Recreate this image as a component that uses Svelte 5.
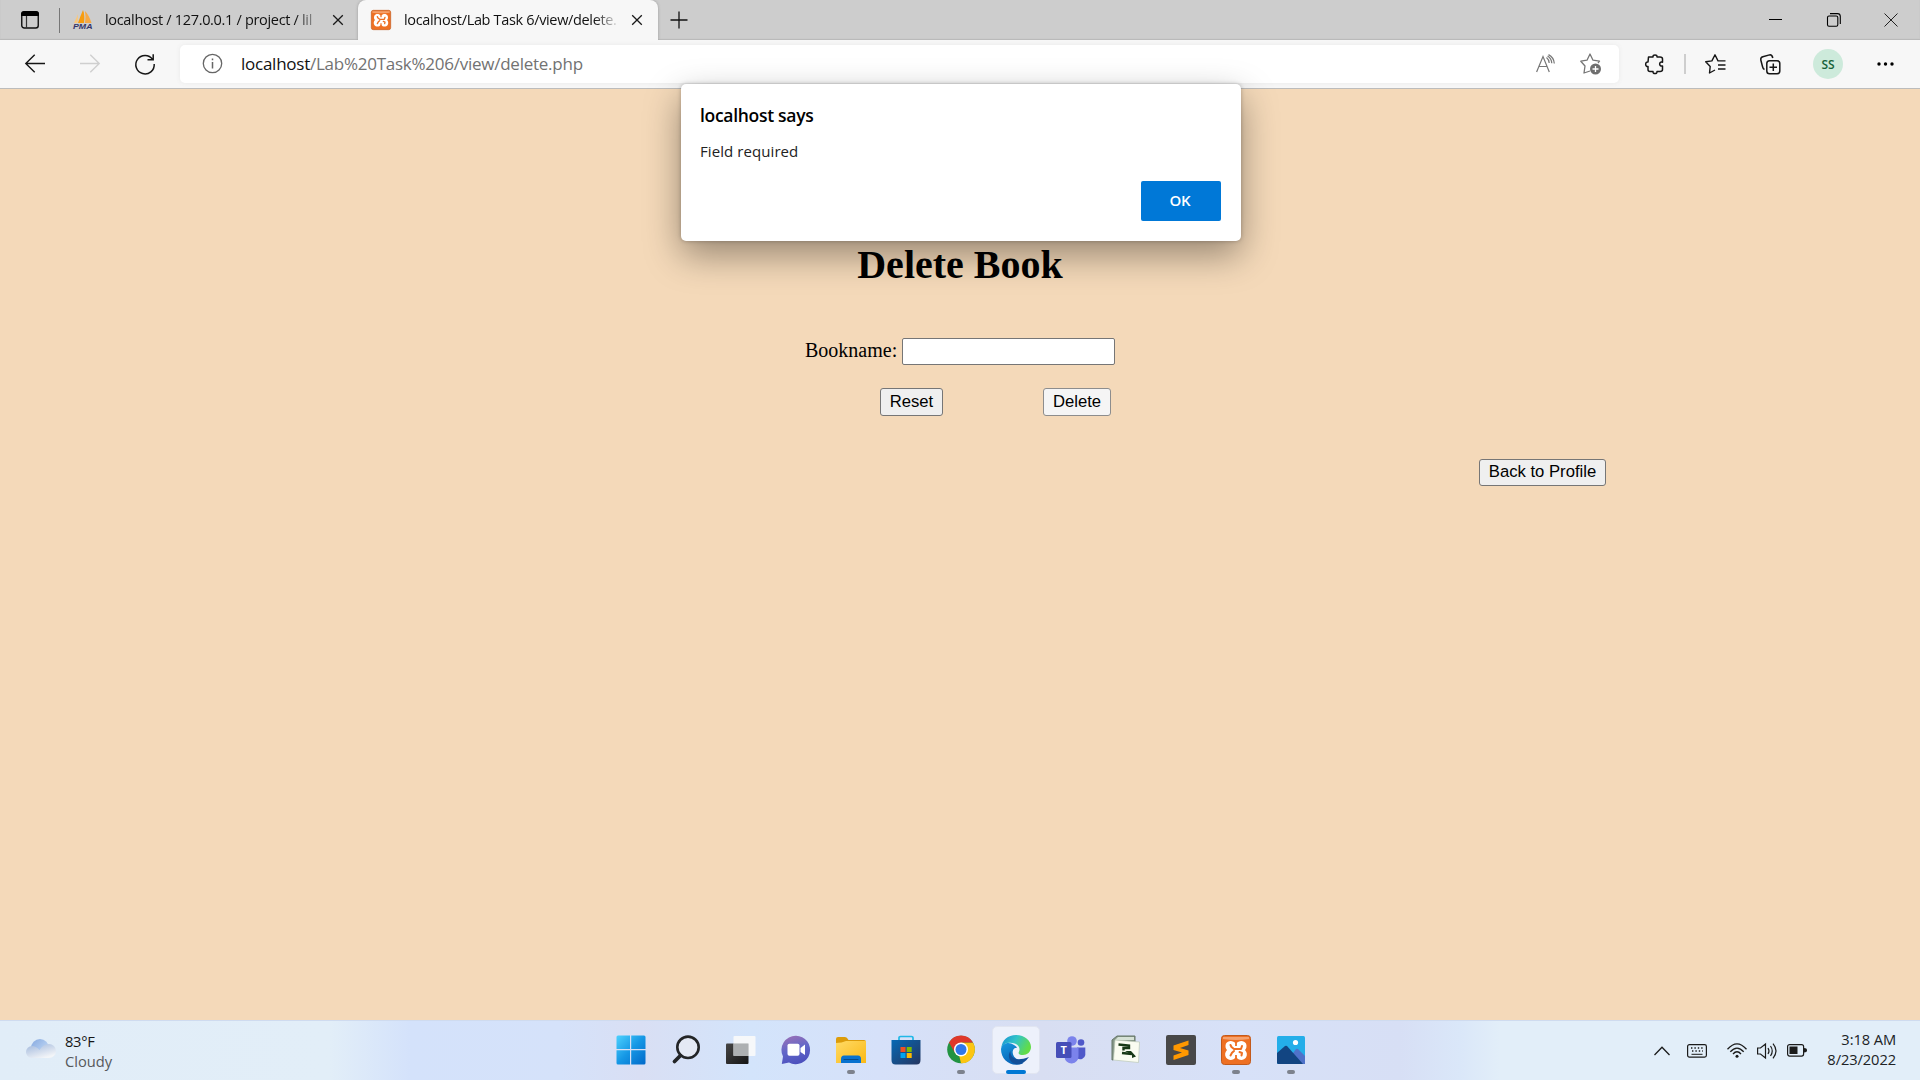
<script>
  const address = { host: 'localhost', path: '/Lab%20Task%206/view/delete.php' };
  let bookname = $state('');
</script>

{#snippet xampp(size)}
  <svg width={size} height={size} viewBox="0 0 30 30">
    <rect x=".5" y=".5" width="29" height="29" rx="3" fill="#ee7023" stroke="#c25a1c" />
    <path d="M2 2H28V4Q15 6 2 4Z" fill="#f5a26e" />
    <path d="M15 8.500C12 5 7 5 5 8.500C4 11 4.500 13.500 6 15C4 17 3.500 20 5 22.500C7.500 26 12.500 25.500 15 22C17.500 25.500 22.500 26 25 22.500C26.500 20 26 17 24 15C25.500 13.500 26 11 25 8.500C23 5 18 5 15 8.500Z" fill="#fff" />
    <path d="M9.500 10L10.500 12L13 14H20L21 11M9.500 20.500L11 17.800L13 16M20.500 20.500L21 18L18.500 17" fill="none" stroke="#ee7023" stroke-width="2" stroke-linejoin="round" stroke-linecap="round" />
    <path d="M15 6V11M15 20V25" stroke="#ee7023" stroke-width="1.800" />
  </svg>
{/snippet}

{#snippet cross(size)}
  <svg width={size} height={size} viewBox="0 0 10 10"><path d="M.2 .2L9.800 9.800M9.800 .2L.2 9.800" stroke="#191919" stroke-width="1.300" /></svg>
{/snippet}

<div class="screen">
  <header class="tabs">
    <svg class="actions" width="18" height="18" viewBox="0 0 18 18">
      <rect x=".75" y="1" width="16.500" height="16" rx="2.500" fill="none" stroke="#111" stroke-width="1.400" />
      <path d="M0 5V3Q0 0 3 0H15Q18 0 18 3V5Z" fill="#000" /><path d="M5.500 5V17" stroke="#333" stroke-width="1.200" />
    </svg>
    <i class="divider"></i>
    <div class="tab first">
      <svg width="20" height="20" viewBox="0 0 20 20">
        <path d="M10 0Q7 7 5 13H11Q12 5 10 0Z" fill="#f89c0e" /><path d="M12 1Q13 7 12 13H18.500Q16 5 12 1Z" fill="#f7a944" /><path d="M5 4L1 13H4.500Z" fill="#fbc779" />
        <text x="0" y="19" font-family="Liberation Sans" font-size="7.800" font-weight="bold" font-style="italic" fill="#34366b" textLength="19.500" lengthAdjust="spacingAndGlyphs">PMA</text>
      </svg>
      <span class="title t1">localhost / 127.0.0.1 / project / lil</span>
      {@render cross(10)}
    </div>
    <div class="tab active">
      {@render xampp(20)}
      <span class="title t2">localhost/Lab Task 6/view/delete.</span>
      {@render cross(10)}
    </div>
    <svg class="plus" width="18" height="18" viewBox="0 0 18 18"><path d="M9 .5V17.500M.5 9H17.500" stroke="#111" stroke-width="1.300" /></svg>
    <div class="window">
      <svg width="14" height="14" viewBox="0 0 14 14"><path d="M0 6.500H13" stroke="#000" /></svg>
      <svg width="14" height="14" viewBox="0 0 14 14" fill="none" stroke="#000" stroke-width="1.100"><rect x=".5" y="3" width="10.300" height="10.300" rx="1.500" /><path d="M3 .6H10.500Q13.300 .6 13.300 3.500V11" /></svg>
      <svg width="14" height="14" viewBox="0 0 14 14"><path d="M.5 .5L13.500 13.500M13.500 .5L.5 13.500" stroke="#222" /></svg>
    </div>
  </header>

  <nav class="toolbar">
    <svg class="back" width="20" height="20" viewBox="0 0 20 20" fill="none" stroke="#161616" stroke-width="1.400"><path d="M20 9.500H.8M9.700 .7L.8 9.500L9.700 18.300" /></svg>
    <svg class="forward" width="20" height="20" viewBox="0 0 20 20" fill="none" stroke="#cfcfcf" stroke-width="1.400"><path d="M0 9.500H19.200M10.300 .7L19.200 9.500L10.300 18.300" /></svg>
    <svg class="reload" width="20" height="20" viewBox="0 0 20 20" fill="none" stroke="#161616" stroke-width="1.500"><path d="M17.600 5.500A9.200 9.200 0 1 0 19.200 10M18.200 .3V5.800H12.500" /></svg>
    <div class="address">
      <svg width="20" height="20" viewBox="0 0 20 20" fill="none" stroke="#666" stroke-width="1.300"><circle cx="10.500" cy="9.500" r="9.200" /><path d="M10.500 8V14.500M10.500 4.500V6.300" stroke-width="1.500" /></svg>
      <span class="url"><b>{address.host}</b>{address.path}</span>
      <svg class="aloud" width="20" height="20" viewBox="0 0 20 20" fill="none" stroke="#767676" stroke-width="1.200"><path d="M.6 18L7 2.500L13.300 18M3 12.500H11M10.500 3.500Q13 5.500 13.200 9M12.500 .6Q18 3.500 18.300 9.500M11.600 2Q15.500 4.500 15.800 9.200" /></svg>
      <svg class="favorite" width="22" height="22" viewBox="0 0 22 22" fill="none" stroke="#767676" stroke-width="1.300" stroke-linejoin="round"><path d="M10 18L4 20L5 13L.8 8.200L7 7.200L10 1L13 7.200L19.500 8.200L18 10" /><circle cx="15.500" cy="16" r="5.500" fill="#6e6e6e" stroke="none" /><path d="M15.500 13V19M12.500 16H18.500" stroke="#fff" /></svg>
    </div>
    <svg class="puzzle" width="20" height="20" viewBox="0 0 20 20" fill="none" stroke="#161616" stroke-width="1.500" stroke-linejoin="round"><path d="M3.500 3H8C7.500 .2 12.500 .2 12 3H15Q17.500 3 17.500 5V8.200C13.700 7 13.700 13 17.500 12V15.500Q17.500 17.500 15 17.500H12C12.500 20.300 7.500 20.300 8 17.500H5Q3 17.500 3 15.500V12.500C-.1 13 -.1 7.500 3 8Z" /></svg>
    <i class="bar-divider"></i>
    <svg class="favorites" width="21" height="20" viewBox="0 0 21 20" fill="none" stroke="#161616" stroke-width="1.400" stroke-linejoin="round"><path d="M10 16L4.500 19L5.200 12.500L.7 7.800L6.900 6.900L10 .8L13 6.900H20.500M13 11H20.500M13 15H20.500" /></svg>
    <svg class="collections" width="21" height="21" viewBox="0 0 21 21" fill="none" stroke="#161616" stroke-width="1.500" stroke-linejoin="round"><rect x="6.800" y="6.800" width="13" height="13" rx="2.800" /><path d="M13.300 9.500V17M9.500 13.300H17M4.500 15.500Q3 15 2.500 12.500L.8 6Q.4 3.500 2.800 2.800L9.500 .9Q12 .4 12.800 4" /></svg>
    <span class="avatar">SS</span>
    <svg class="more" width="17" height="4" viewBox="0 0 17 4"><circle cx="2" cy="2" r="1.700" /><circle cx="8.500" cy="2" r="1.700" /><circle cx="15" cy="2" r="1.700" /></svg>
  </nav>

  <main>
    <h1>Delete Book</h1>
    <label class="field"><span>Bookname:</span> <input type="text" bind:value={bookname} /></label>
    <div class="buttons">
      <button type="button" onclick={() => (bookname = '')}>Reset</button>
      <button type="button" class="delete">Delete</button>
    </div>
    <button type="button" class="profile">Back to Profile</button>
  </main>

  <div class="dialog" role="alertdialog">
    <strong>localhost says</strong>
    <p>Field required</p>
    <button type="button" class="ok">OK</button>
  </div>

  <footer>
    <div class="weather">
      <svg width="30" height="20" viewBox="0 0 30 20">
        <defs>
          <linearGradient id="cb" x2="1" y2="1"><stop stop-color="#86a9df" /><stop offset="1" stop-color="#d0e4fb" /></linearGradient>
          <linearGradient id="cf" x2=".6" y2="1"><stop stop-color="#9fb7dc" /><stop offset="1" stop-color="#f3f5f8" /></linearGradient>
        </defs>
        <circle cx="14" cy="9" r="9" fill="url(#cb)" />
        <path d="M6 19A6 6 0 0 1 6 7Q10 7 13.500 11Q17 5 23 5A7 7 0 0 1 23 19Z" fill="url(#cf)" />
      </svg>
      <div><span class="temp">83°F</span><span class="sky">Cloudy</span></div>
    </div>

    <div class="apps">
      <div class="app">
        <svg width="30" height="30" viewBox="0 0 30 30"><defs><linearGradient id="win" gradientUnits="userSpaceOnUse" x1="0" y1="0" x2="30" y2="30"><stop stop-color="#4ed3ff" /><stop offset=".5" stop-color="#1597e5" /><stop offset="1" stop-color="#0067c8" /></linearGradient></defs><path d="M2 .5H14V14H.5V2Q.5 .5 2 .5ZM15.200 .5H28Q29.500 .5 29.500 2V14H15.200ZM.5 15.200H14V29.500H2Q.5 29.500 .5 28ZM15.200 15.200H29.500V28Q29.500 29.500 28 29.500H15.200Z" fill="url(#win)" /></svg>
      </div>
      <div class="app">
        <svg width="30" height="30" viewBox="0 0 30 30" fill="none" stroke="#232527"><circle cx="17" cy="12.300" r="10.700" fill="#e4e9f4" stroke-width="2.600" /><path d="M9.500 20.500L3.500 26.500" stroke-width="3.800" stroke-linecap="round" /></svg>
      </div>
      <div class="app">
        <svg width="30" height="30" viewBox="0 0 30 30"><defs><linearGradient id="tv" x2="1" y2="1"><stop stop-color="#454545" /><stop offset="1" stop-color="#151515" /></linearGradient></defs><rect y="8.500" width="22.500" height="20.500" rx="1" fill="url(#tv)" /><rect x="7.500" y="1" width="22" height="20" rx="1" fill="#fafafa" opacity=".9" /><path d="M7.500 8.500H22.500V21H7.500Z" fill="#adb0b2" /></svg>
      </div>
      <div class="app">
        <svg width="30" height="30" viewBox="0 0 30 30"><defs><linearGradient id="chat" x1=".2" y1="0" x2=".5" y2="1"><stop stop-color="#9a70b6" /><stop offset=".5" stop-color="#6267c9" /><stop offset="1" stop-color="#4c50bd" /></linearGradient></defs><path d="M15 .8A14.200 14.200 0 1 1 8 27.400L.8 29L2 21.500A14.200 14.200 0 0 1 15 .8Z" fill="url(#chat)" /><rect x="6.500" y="8.800" width="12" height="12" rx="1.800" fill="#fff" /><path d="M19.500 13L24 9.500V20L19.500 17Z" fill="#fff" /></svg>
      </div>
      <div class="app">
        <svg width="30" height="30" viewBox="0 0 30 30"><defs><linearGradient id="fold" x2="1" y2="1"><stop stop-color="#ffda66" /><stop offset="1" stop-color="#fab915" /></linearGradient></defs><path d="M0 4Q0 2 2 2H9Q11 2 12.500 5H28Q30 5 30 7V12H0Z" fill="#dc9c0a" /><path d="M0 8Q6 8 10 6H30V28H0Z" fill="url(#fold)" /><path d="M5 28V24Q5 20.500 8 20.500H22Q25 20.500 25 24V28Z" fill="#0872cf" /><path d="M8 24.500H22" stroke="#064b8c" stroke-linecap="round" /></svg>
        <i class="dot"></i>
      </div>
      <div class="app">
        <svg width="30" height="30" viewBox="0 0 30 30"><defs><linearGradient id="shop" x2="1" y2="1"><stop stop-color="#0669b5" /><stop offset="1" stop-color="#263660" /></linearGradient></defs><path d="M8 6V2.800Q8 1.500 9.500 1.500H20.500Q22 1.500 22 2.800V6" fill="none" stroke="#21b8e7" stroke-width="1.700" /><path d="M.5 5H29.500V25Q29.500 29.500 25.500 29.500H4.500Q.5 29.500 .5 25Z" fill="url(#shop)" /><path d="M9.500 12H14.500V17H9.500Z" fill="#f05022" /><path d="M15.700 12H20.700V17H15.700Z" fill="#7fba00" /><path d="M9.500 18H14.500V23H9.500Z" fill="#00a4ef" /><path d="M15.700 18H20.700V23H15.700Z" fill="#ffb900" /></svg>
      </div>
      <div class="app">
        <svg width="30" height="30" viewBox="0 0 30 30"><circle cx="15" cy="14.500" r="13.800" fill="#229342" /><path d="M15 14.500V28.300A13.800 13.800 0 0 0 27 7.600H15Z" fill="#fcc512" /><path d="M15 14.500L9 18L3 7.600A13.800 13.800 0 0 1 27 7.600H15Z" fill="#df382b" /><path d="M21 18L15 28.300L13 20Z" fill="#fcc512" /><circle cx="15" cy="14.500" r="7" fill="#fff" /><circle cx="15" cy="14.500" r="5.500" fill="#3077ea" /></svg>
        <i class="dot"></i>
      </div>
      <div class="app current">
        <svg width="30" height="30" viewBox="0 0 30 30">
          <defs>
            <linearGradient id="et" x2="1" y2=".4"><stop stop-color="#168ed4" /><stop offset=".5" stop-color="#31c4c8" /><stop offset="1" stop-color="#62dc48" /></linearGradient>
            <linearGradient id="el" x2=".5" y2="1"><stop stop-color="#1799df" /><stop offset="1" stop-color="#0861b5" /></linearGradient>
          </defs>
          <path d="M.3 13C1 5 7 0 15 0C24 0 30 6 30 12C30 17 26 20 22 20C18 20 16.800 18.500 18 16.700C20 12 16 8 11 8C6 7 2 9 .3 13Z" fill="url(#et)" />
          <path d="M0 14C1 8 8 6 13 10C16 12 17 13 14 13C10 15 11 23 18 25L22 28.500C10 33 0 25 0 14Z" fill="url(#el)" />
          <path d="M9.500 16C9 23 15 27 28 22C23 29 17 31 12 28C7 25 7 19 9.500 16Z" fill="#124f98" />
        </svg>
        <i class="line"></i>
      </div>
      <div class="app">
        <svg width="30" height="30" viewBox="0 0 30 30"><circle cx="25" cy="7.500" r="3.300" fill="#5059c9" /><path d="M21 12.500H29.300V20A5 5 0 0 1 21 23Z" fill="#5059c9" /><circle cx="16" cy="6" r="4.800" fill="#7b83eb" /><path d="M9 12.500H22.500V21A7 7 0 0 1 8.500 22Z" fill="#7b83eb" /><rect y="7" width="15.500" height="16" rx="1.500" fill="#464eb8" /><text x="7.700" y="19" text-anchor="middle" font-family="Open Sans" font-weight="bold" font-size="11" fill="#fff">T</text></svg>
      </div>
      <div class="app">
        <svg width="30" height="30" viewBox="0 0 30 30"><path d="M1 5L6 1H24V7L5 24L1 25Z" fill="#879889" stroke="#657567" /><path d="M7 2H23V5H4Z" fill="#d6e2d6" /><path d="M4 5L28.500 7L27.500 27.500L2.500 25Z" fill="#fafcf1" stroke="#bcc9b8" stroke-width=".7" /><path d="M7.500 9.500L18 10.500V13H12.500V15.500M11 18L21 19" fill="none" stroke="#173816" stroke-width="2.400" /><path d="M14 16H20L25 21.500L21 23V20Z" fill="#173816" /></svg>
      </div>
      <div class="app">
        <svg width="30" height="30" viewBox="0 0 30 30"><rect width="30" height="30" rx="2" fill="#484848" /><path d="M7.500 10.500L22.500 5.500V10L14 13L22.500 15.500V20L7.500 25V20.500L16 17.500L7.500 15Z" fill="#ff9800" /></svg>
      </div>
      <div class="app">{@render xampp(30)}<i class="dot"></i></div>
      <div class="app">
        <svg width="28" height="28" viewBox="0 0 28 28"><rect width="28" height="28" rx="1.500" fill="#24aee9" /><path d="M14 20L19 13Q20 12.500 21 13L28 20V28H10Z" fill="#4f72c9" /><path d="M0 17L8 10Q9 9.500 10 10L26 28H1.500Q0 28 0 26.500Z" fill="#124582" /><circle cx="18.500" cy="6.500" r="2.600" fill="#fff" /></svg>
        <i class="dot"></i>
      </div>
    </div>

    <div class="tray">
      <svg class="chevron" width="16" height="10" viewBox="0 0 16 10" fill="none" stroke="#1b1b1b" stroke-width="1.300"><path d="M.5 9L8 1.300L15.500 9" /></svg>
      <svg class="keyboard" width="20" height="14" viewBox="0 0 20 14" fill="none" stroke="#1b1b1b"><rect x=".6" y=".6" width="18.800" height="12.500" rx="1.800" stroke-width="1.200" /><path d="M4 4H16.500M5 7H16" stroke-width="1.300" stroke-dasharray="1.400 2" /><path d="M4.500 10.300H15.500" /></svg>
      <svg class="wifi" width="20" height="16" viewBox="0 0 20 16" fill="none" stroke="#1b1b1b" stroke-width="1.300"><path d="M.5 6.200Q10 -4.500 19.500 6.200M3.300 8.800Q10 1.300 16.700 8.800M6 11Q10 6.500 14 11" /><circle cx="10" cy="13.300" r="1.500" fill="#1b1b1b" stroke="none" /></svg>
      <svg class="sound" width="20" height="16" viewBox="0 0 20 16" fill="none" stroke="#1b1b1b" stroke-width="1.200"><path d="M.6 5H3.500L8.500 1V15L3.500 11H.6ZM11 5Q13 8 11 11M13.500 3Q17 8 13.500 13M16 .7Q22 8 16 15.300" /></svg>
      <svg class="battery" width="20" height="13" viewBox="0 0 20 13"><rect x=".6" y=".6" width="16" height="11.500" rx="2" fill="none" stroke="#1b1b1b" stroke-width="1.200" /><rect x="2.500" y="2.500" width="8" height="7.500" fill="#1b1b1b" /><path d="M17 4Q20 4 20 6.300Q20 8.500 17 8.500Z" fill="#1b1b1b" /></svg>
      <div class="clock"><span>3:18 AM</span><span class="date">8/23/2022</span></div>
    </div>
  </footer>
</div>

<style>
  :global(body) { margin: 0; overflow: hidden; }
  .screen { position: relative; display: flex; flex-direction: column; width: 1920px; height: 1080px; background: #f4d9b9; font-family: 'Open Sans', sans-serif; }
  svg { flex: none; overflow: visible; display: block; }
  .tabs { display: flex; align-items: center; height: 40px; background: #cdcdcd; box-shadow: inset 0 -1px 1px #b9b9b9; flex: none; }
  .actions { margin-left: 21px; }
  .divider { width: 1px; height: 25px; margin-left: 20px; background: #777; }
  .tab { box-sizing: border-box; display: flex; align-items: center; height: 40px; flex: none; }
  .first { width: 298px; padding-left: 13px; }
  .active { width: 300px; padding-left: 13px; background: #f7f7f7; border-radius: 8px 8px 0 0; box-shadow: 0 0 3px #999; clip-path: inset(-3px -3px 0 -3px); }
  .title { white-space: nowrap; font-size: 14.5px; line-height: 22px; color: #111; mask-image: linear-gradient(90deg, #000 calc(100% - 26px), transparent); }
  .t1 { width: 217px; margin: -1px 11px 0 12px; letter-spacing: -0.32px; }
  .t2 { width: 216px; margin: -1px 12px 0 13px; letter-spacing: -0.34px; }
  .plus { margin-left: 12px; }
  .window { display: flex; gap: 43.500px; margin: 0 22px 0 auto; }
  .toolbar { box-sizing: border-box; display: flex; align-items: center; height: 49px; background: #f7f7f7; border-bottom: 1px solid #bcbcbc; flex: none; }
  .back { margin-left: 25px; }
  .forward, .reload { margin-left: 35px; }
  .address { box-sizing: border-box; display: flex; align-items: center; width: 1439px; height: 38px; margin-left: 25px; padding: 0 17px 0 22px; background: #fff; border-radius: 5px; box-shadow: 0 0 5px #e9e9e9; }
  .url { margin: -1px 0 0 19px; font-size: 17px; line-height: 26px; color: #727272; letter-spacing: -0.25px; }
  .url b { font-weight: 400; color: #111; }
  .aloud { margin-left: auto; }
  .favorite { margin-left: 24px; }
  .puzzle { margin-left: 26px; }
  .bar-divider { width: 2px; height: 20px; margin-left: 19px; background: #cecece; }
  .favorites { margin-left: 19px; }
  .collections { margin-left: 34px; }
  .avatar { display: grid; place-items: center; width: 30px; height: 30px; margin-left: 32px; border-radius: 50%; background: #cdeadb; color: #17623a; font-size: 12px; font-weight: 600; }
  .more { margin-left: 34px; }
  main { display: flex; flex-direction: column; flex: 1; font-family: 'Liberation Serif', serif; color: #000; }
  h1 { margin: 153px 0 0; text-align: center; font-size: 40px; line-height: 46px; }
  .field { display: flex; align-items: center; gap: 5px; height: 27px; margin: 50px 0 0 805px; font-size: 20px; }
  .field span { margin-top: -2px; }
  input { box-sizing: border-box; width: 213px; height: 27px; border: 1px solid #767676; border-radius: 2px; background: #fff; padding: 1px 2px; font-size: 16.670px; }
  main button { box-sizing: border-box; border: 1px solid #767676; border-radius: 3px; background: #efefef; padding: 0; color: #000; font-family: 'Liberation Sans', sans-serif; font-size: 16.670px; line-height: 20px; }
  .buttons { display: flex; gap: 100px; margin: 23px 0 0 880px; }
  .buttons button { width: 63px; height: 28px; }
  .buttons .delete { width: 68px; background: #f5f5f5; border-color: #8d8d8d; }
  main .profile { width: 127px; height: 27px; margin: 43px 0 0 1479px; padding-bottom: 2px; }
  .dialog { position: absolute; left: 681px; top: 84px; box-sizing: border-box; display: flex; flex-direction: column; width: 560px; height: 157px; padding: 19px 20px 20px 19px; background: #fff; border-radius: 5px; box-shadow: 0 14px 36px rgb(0 0 0 / 38%), 0 0 4px rgb(0 0 0 / 25%); color: #000; }
  .dialog strong { font-size: 17.500px; line-height: 24px; font-weight: 600; letter-spacing: -0.3px; }
  .dialog p { margin: 14px 0 0; font-size: 15px; line-height: 20px; color: #222; letter-spacing: .08px; }
  .ok { width: 80px; height: 40px; margin: 20px 0 0 auto; padding: 0 2px 2px 0; border: 0; border-radius: 2px; background: #0078d7; color: #fff; font: 600 15px 'Open Sans', sans-serif; letter-spacing: -0.3px; }
  footer { box-sizing: border-box; display: grid; grid-template-columns: 603px 715px 1fr; height: 60px; flex: none; border-top: 1px solid #cfdbef; background: linear-gradient(90deg, #e1edf8 0, #e2eef8 330px, #d4e2fb 410px, #d5e2fa 560px, #d9dff4 640px, #d3e4fb 750px, #d6e1f9 880px, #d8def2 1040px, #d7e1f8 1240px, #d7dff5 1400px, #dae7f9 1460px, #e2eef9 1500px, #e2eef9); }
  .weather { display: flex; align-items: flex-start; padding: 18px 0 0 26px; }
  .weather div { display: flex; flex-direction: column; margin: -8px 0 0 9px; font-size: 14.700px; line-height: 20px; color: #161616; }
  .weather .sky { color: #57595c; }
  .temp { letter-spacing: -0.3px; }
  .apps { display: flex; }
  .app { position: relative; box-sizing: border-box; display: grid; place-items: center; width: 55px; height: 59px; padding-bottom: 1px; }
  .current::before { content: ''; position: absolute; left: 4px; top: 5px; width: 46px; height: 46px; background: #edf1fb; border: 1px solid #e1e5f1; border-radius: 5px; }
  .current svg { position: relative; }
  .dot, .line { position: absolute; left: 24px; top: 49px; width: 8px; height: 4px; border-radius: 2px; background: #7d828d; }
  .line { left: 18px; width: 20px; background: #0078d4; }
  .tray { display: flex; align-items: center; justify-content: flex-end; padding-right: 24px; }
  .keyboard { margin-left: 17px; }
  .wifi { margin-left: 20px; }
  .sound, .battery { margin-left: 10px; }
  .clock { display: flex; flex-direction: column; width: 89px; margin-top: -3px; text-align: right; font-size: 14.700px; line-height: 20px; color: #202225; letter-spacing: -0.1px; }
</style>
